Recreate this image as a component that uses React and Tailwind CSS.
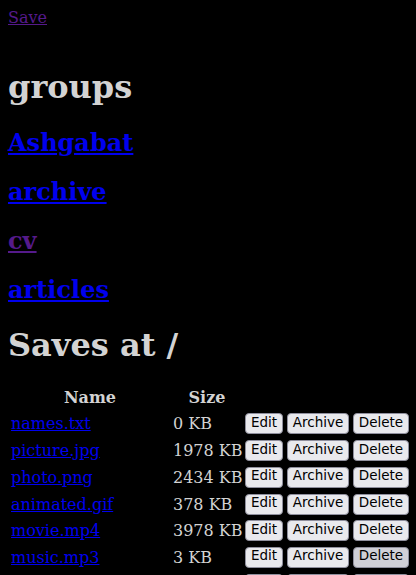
const files = [
    { name: 'names.txt', size: '0 KB' },
    { name: 'picture.jpg', size: '1978 KB' },
    { name: 'photo.png', size: '2434 KB' },
    { name: 'animated.gif', size: '378 KB' },
    { name: 'movie.mp4', size: '3978 KB' },
    { name: 'music.mp3', size: '3 KB', hover: true },
    { name: 'document.pdf', size: '512 KB' },
];

const groups = [
    { label: 'Ashgabat', mt: 'mt-[21.8px]' },
    { label: 'archive', mt: 'mt-[20px]' },
    { label: 'cv', mt: 'mt-[20px]', visited: true },
    { label: 'articles', mt: 'mt-[20px]' },
];

function Btn({ children, hover, w }) {
    return (
        <button
            className={`${w} ${hover ? 'bg-[#d0d0d7]' : 'bg-[#e9e9ed]'} block h-[21px] rounded-[4px] border border-[#8f8f9d] px-0 pt-0 pb-[3px] text-center font-["DejaVu_Sans",sans-serif] text-[13.5px] leading-[15px] text-black`}
        >
            {children}
        </button>
    );
}

export default function App() {
    return (
        <div className="flex min-h-[575px] flex-col items-start bg-black p-[8px] font-['DejaVu_Serif',serif] text-[16px] leading-[19px] text-[#d3d3d3]">
            <a href="#" className="text-[#551a8b] underline">Save</a>

            <h1 className="mt-[42.4px] text-[32px] font-bold leading-[37px]">groups</h1>
            {groups.map((g) => (
                <h2 key={g.label} className={`${g.mt} text-[24px] font-bold leading-[29px]`}>
                    <a href="#" className={g.visited ? 'text-[#551a8b] underline' : 'text-[#0000ee] underline'}>
                        {g.label}
                    </a>
                </h2>
            ))}

            <h1 className="mt-[21.7px] text-[32px] font-bold leading-[38px]">Saves at /</h1>

            <table className="mt-[21.6px] w-[404px] table-fixed border-separate border-spacing-[2px]">
                <colgroup>
                    <col className="w-[160px]" />
                    <col className="w-[70px]" />
                    <col className="w-[40px]" />
                    <col className="w-[64px]" />
                    <col className="w-[58px]" />
                </colgroup>
                <thead>
                    <tr>
                        <th className="p-[1px] text-center font-bold">Name</th>
                        <th className="p-[1px] text-center font-bold">Size</th>
                        <th className="p-[1px]"></th>
                        <th className="p-[1px]"></th>
                        <th className="p-[1px]"></th>
                    </tr>
                </thead>
                <tbody>
                    {files.map((f) => (
                        <tr key={f.name}>
                            <td className="h-[24.7px] px-[1px] pt-[4px] pb-0 align-top">
                                <a href="#" className="text-[#0000ee] underline">{f.name}</a>
                            </td>
                            <td className="h-[24.7px] px-[1px] pt-[4px] pb-0 align-top whitespace-nowrap">{f.size}</td>
                            <td className="h-[24.7px] px-[1px] pt-[3px] pb-0 align-top"><Btn w="w-[38px]">Edit</Btn></td>
                            <td className="h-[24.7px] px-[1px] pt-[3px] pb-0 align-top"><Btn w="w-[62px]">Archive</Btn></td>
                            <td className="h-[24.7px] px-[1px] pt-[3px] pb-0 align-top"><Btn w="w-[56px]" hover={f.hover}>Delete</Btn></td>
                        </tr>
                    ))}
                </tbody>
            </table>
        </div>
    );
}
